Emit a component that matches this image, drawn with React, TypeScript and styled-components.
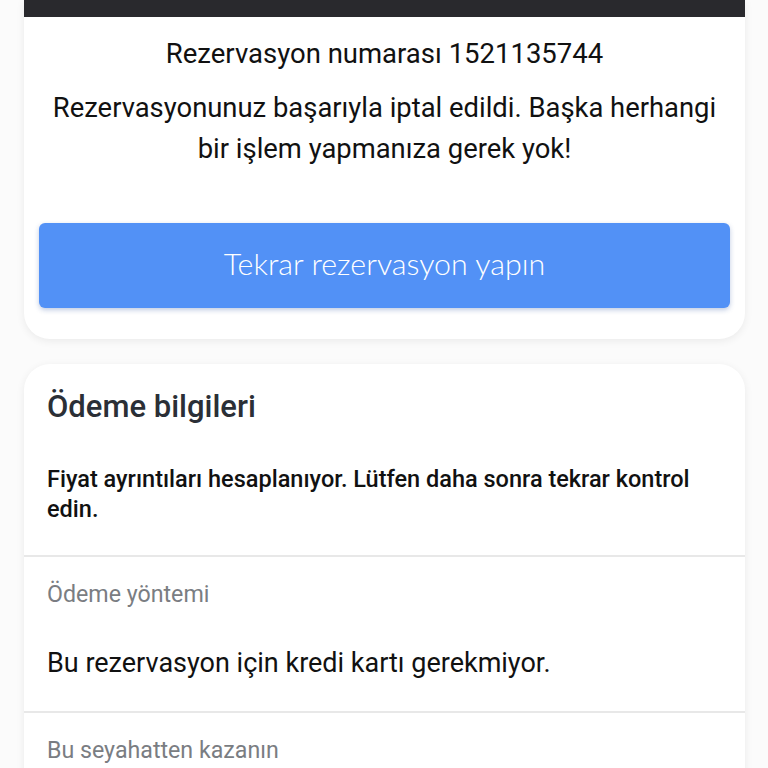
import React from "react";
import styled, { createGlobalStyle } from "styled-components";

const Global = createGlobalStyle`
  html, body { margin: 0; padding: 0; background: #fbfbfb; }
  body { font-family: Roboto, "Noto Sans", sans-serif; color: #111; }
`;

const Page = styled.div`
  padding: 0 23px 0 24px;
  display: flex;
  flex-direction: column;
  gap: 25px;
`;

const Card = styled.section<{ $top?: boolean }>`
  background: #fff;
  border-radius: ${(p) => (p.$top ? "0 0 26px 26px" : "26px 26px 0 0")};
  box-shadow: 0 2px 8px rgba(0, 0, 0, 0.07);
  overflow: hidden;
`;

const DarkStrip = styled.div`
  height: 17px;
  background: #29292d;
`;

const CancelBody = styled.div`
  padding: 20px 15px 31px;
  display: flex;
  flex-direction: column;
  align-items: center;
  text-align: center;
`;

const RefNumber = styled.div`
  font-size: 27.5px;
  line-height: 34px;
  color: #111;
`;

const Message = styled.p`
  margin: 17px 0 0;
  font-size: 27.4px;
  line-height: 41px;
  color: #111;
`;

const PrimaryButton = styled.button`
  margin-top: 53px;
  width: 100%;
  height: 85px;
  padding: 0 0 5px;
  border: none;
  border-radius: 6px;
  background: #5291f6;
  color: #fff;
  font-family: Lato, "Open Sans", sans-serif;
  font-size: 30.4px;
  font-weight: 300;
  box-shadow: 0 2px 5px rgba(40, 80, 160, 0.3);
`;

const SectionHead = styled.h2`
  margin: 0;
  padding: 25px 23px 0;
  font-size: 31px;
  line-height: 36px;
  font-weight: 500;
  color: #2b2f36;
`;

const Notice = styled.p`
  margin: 0;
  padding: 39px 23px 31px;
  font-size: 23.5px;
  line-height: 30px;
  font-weight: 500;
  color: #111;
`;

const Row = styled.div`
  border-top: 2px solid #e8e8e8;
  padding: 22px 23px 33px;
`;

const Label = styled.div`
  font-size: 23.2px;
  line-height: 30px;
  color: #7a7d82;
`;

const Value = styled.div`
  margin-top: 39px;
  font-size: 27px;
  line-height: 30px;
  color: #111;
`;

export default function App() {
  return (
    <>
      <Global />
      <Page>
        <Card $top>
          <DarkStrip />
          <CancelBody>
            <RefNumber>Rezervasyon numarası 1521135744</RefNumber>
            <Message>
              Rezervasyonunuz başarıyla iptal edildi. Başka herhangi
              <br />
              bir işlem yapmanıza gerek yok!
            </Message>
            <PrimaryButton>Tekrar rezervasyon yapın</PrimaryButton>
          </CancelBody>
        </Card>
        <Card>
          <SectionHead>Ödeme bilgileri</SectionHead>
          <Notice>
            Fiyat ayrıntıları hesaplanıyor. Lütfen daha sonra tekrar kontrol
            edin.
          </Notice>
          <Row>
            <Label>Ödeme yöntemi</Label>
            <Value>Bu rezervasyon için kredi kartı gerekmiyor.</Value>
          </Row>
          <Row>
            <Label>Bu seyahatten kazanın</Label>
          </Row>
        </Card>
      </Page>
    </>
  );
}
